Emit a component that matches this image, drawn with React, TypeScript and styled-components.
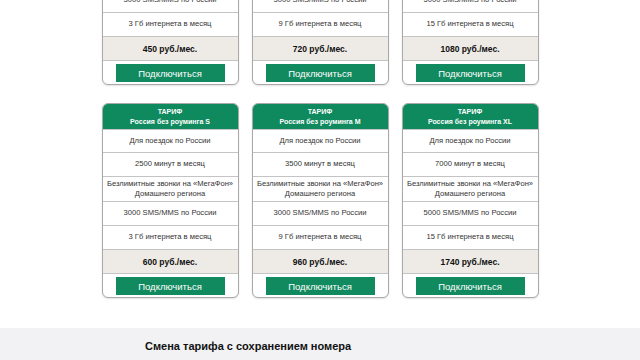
import React from "react";
import styled, { createGlobalStyle } from "styled-components";

type Tariff = {
  name: string;
  trips: string;
  minutes: string;
  calls: string[];
  sms: string;
  internet: string;
  price: string;
};

const topRow: Tariff[] = [
  {
    name: "Россия S",
    trips: "Для поездок по России",
    minutes: "2500 минут в месяц",
    calls: ["Безлимитные звонки на «МегаФон»", "Домашнего региона"],
    sms: "3000 SMS/MMS по России",
    internet: "3 Гб интернета в месяц",
    price: "450 руб./мес.",
  },
  {
    name: "Россия M",
    trips: "Для поездок по России",
    minutes: "3500 минут в месяц",
    calls: ["Безлимитные звонки на «МегаФон»", "Домашнего региона"],
    sms: "3000 SMS/MMS по России",
    internet: "9 Гб интернета в месяц",
    price: "720 руб./мес.",
  },
  {
    name: "Россия XL",
    trips: "Для поездок по России",
    minutes: "7000 минут в месяц",
    calls: ["Безлимитные звонки на «МегаФон»", "Домашнего региона"],
    sms: "5000 SMS/MMS по России",
    internet: "15 Гб интернета в месяц",
    price: "1080 руб./мес.",
  },
];

const bottomRow: Tariff[] = [
  {
    name: "Россия без роуминга S",
    trips: "Для поездок по России",
    minutes: "2500 минут в месяц",
    calls: ["Безлимитные звонки на «МегаФон»", "Домашнего региона"],
    sms: "3000 SMS/MMS по России",
    internet: "3 Гб интернета в месяц",
    price: "600 руб./мес.",
  },
  {
    name: "Россия без роуминга M",
    trips: "Для поездок по России",
    minutes: "3500 минут в месяц",
    calls: ["Безлимитные звонки на «МегаФон»", "Домашнего региона"],
    sms: "3000 SMS/MMS по России",
    internet: "9 Гб интернета в месяц",
    price: "960 руб./мес.",
  },
  {
    name: "Россия без роуминга XL",
    trips: "Для поездок по России",
    minutes: "7000 минут в месяц",
    calls: ["Безлимитные звонки на «МегаФон»", "Домашнего региона"],
    sms: "5000 SMS/MMS по России",
    internet: "15 Гб интернета в месяц",
    price: "1740 руб./мес.",
  },
];

function TariffCard({ t }: { t: Tariff }) {
  return (
    <Card>
      <Header>
        ТАРИФ
        <br />
        {t.name}
      </Header>
      <Row $h={23}>{t.trips}</Row>
      <Row $h={24}>{t.minutes}</Row>
      <Row $h={25}>
        {t.calls[0]}
        <br />
        {t.calls[1]}
      </Row>
      <Row $h={24}>{t.sms}</Row>
      <Row $h={24}>{t.internet}</Row>
      <PriceRow>{t.price}</PriceRow>
      <ButtonRow>
        <ConnectButton>Подключиться</ConnectButton>
      </ButtonRow>
    </Card>
  );
}

export default function App() {
  return (
    <>
      <GlobalStyle />
      <Page>
        <Grid>
          {topRow.map((t) => (
            <TariffCard key={t.name} t={t} />
          ))}
          {bottomRow.map((t) => (
            <TariffCard key={t.name} t={t} />
          ))}
        </Grid>
        <Section>
          <SectionInner>
            <SectionTitle>Смена тарифа с сохранением номера</SectionTitle>
          </SectionInner>
        </Section>
      </Page>
    </>
  );
}

const GlobalStyle = createGlobalStyle`
  *, *::before, *::after {
    box-sizing: border-box;
  }
  html, body {
    margin: 0;
    padding: 0;
    background: #ffffff;
    overflow: hidden;
  }
  body {
    font-family: "Liberation Sans", Arial, sans-serif;
    color: #222;
  }
`;

const Page = styled.div`
  width: 640px;
  height: 360px;
  overflow: hidden;
`;

const Grid = styled.div`
  display: grid;
  grid-template-columns: repeat(3, 137px);
  column-gap: 13px;
  row-gap: 18px;
  justify-content: center;
  margin-top: -110px;
`;

const Card = styled.div`
  display: flex;
  flex-direction: column;
  border: 1px solid #a9a9a9;
  border-radius: 6px;
  overflow: hidden;
  background: #fff;
  box-shadow: 0 1px 2px rgba(0, 0, 0, 0.12);
`;

const Header = styled.div`
  height: 25px;
  background: #0f8a5e;
  color: #fff;
  font-weight: 700;
  font-size: 7px;
  line-height: 10px;
  text-align: center;
  display: flex;
  align-items: center;
  justify-content: center;
`;

const Row = styled.div<{ $h: number }>`
  height: ${(p) => p.$h}px;
  border-top: 1px solid #c4c4c4;
  display: flex;
  align-items: center;
  justify-content: center;
  text-align: center;
  font-size: 7.6px;
  line-height: 10.5px;
  color: #333;
  white-space: nowrap;
`;

const PriceRow = styled.div`
  height: 24px;
  border-top: 1px solid #c4c4c4;
  background: #eeebe6;
  display: flex;
  align-items: center;
  justify-content: center;
  font-size: 8.5px;
  font-weight: 700;
  color: #111;
`;

const ButtonRow = styled.div`
  height: 24px;
  border-top: 1px solid #c4c4c4;
  display: flex;
  align-items: flex-start;
  justify-content: center;
  padding-top: 3px;
`;

const ConnectButton = styled.div`
  width: 109px;
  height: 18px;
  background: #128a5f;
  color: #fff;
  font-size: 9.5px;
  display: flex;
  align-items: center;
  justify-content: center;
`;

const Section = styled.div`
  margin-top: 30px;
  background: #f2f2f4;
  padding: 12px 0 20px;
`;

const SectionInner = styled.div`
  width: 350px;
  margin: 0 auto;
`;

const SectionTitle = styled.div`
  font-family: "Liberation Sans", Arial, sans-serif;
  font-size: 11px;
  font-weight: 700;
  color: #111;
`;
